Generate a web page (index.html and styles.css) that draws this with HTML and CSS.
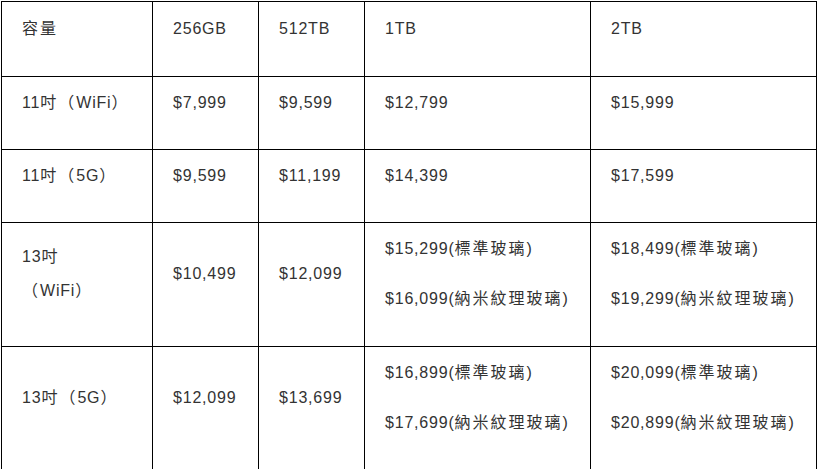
FILE: index.html
```html
<!DOCTYPE html>
<html lang="zh-Hant">
<head>
<meta charset="utf-8">
<link rel="stylesheet" href="styles.css">
</head>
<body>
<table class="price-table">
  <colgroup>
    <col class="c1"><col class="c2"><col class="c3"><col class="c4"><col class="c5">
  </colgroup>
  <tr class="head">
    <td><p><span class="zh">容量</span></p></td>
    <td><p>256GB</p></td>
    <td><p>512TB</p></td>
    <td><p>1TB</p></td>
    <td><p>2TB</p></td>
  </tr>
  <tr>
    <td><p>11<span class="zh">吋（</span>WiFi<span class="zh">）</span></p></td>
    <td><p>$7,999</p></td>
    <td><p>$9,599</p></td>
    <td><p>$12,799</p></td>
    <td><p>$15,999</p></td>
  </tr>
  <tr>
    <td><p>11<span class="zh">吋（</span>5G<span class="zh">）</span></p></td>
    <td><p>$9,599</p></td>
    <td><p>$11,199</p></td>
    <td><p>$14,399</p></td>
    <td><p>$17,599</p></td>
  </tr>
  <tr class="tall">
    <td><p class="wrap">13<span class="zh">吋</span><br><span class="zh">（</span>WiFi<span class="zh">）</span></p></td>
    <td><p>$10,499</p></td>
    <td><p>$12,099</p></td>
    <td><p>$15,299(<span class="zh">標準玻璃</span>)</p><p>$16,099(<span class="zh">納米紋理玻璃</span>)</p></td>
    <td><p>$18,499(<span class="zh">標準玻璃</span>)</p><p>$19,299(<span class="zh">納米紋理玻璃</span>)</p></td>
  </tr>
  <tr class="tall">
    <td><p>13<span class="zh">吋（</span>5G<span class="zh">）</span></p></td>
    <td><p>$12,099</p></td>
    <td><p>$13,699</p></td>
    <td><p>$16,899(<span class="zh">標準玻璃</span>)</p><p>$17,699(<span class="zh">納米紋理玻璃</span>)</p></td>
    <td><p>$20,099(<span class="zh">標準玻璃</span>)</p><p>$20,899(<span class="zh">納米紋理玻璃</span>)</p></td>
  </tr>
</table>
</body>
</html>
```
FILE: styles.css
```css
html, body {
  margin: 0;
  padding: 0;
  background: #fff;
}
body {
  padding: 1px 0 0 1px;
  font-family: "Liberation Sans", Arial, "Noto Sans CJK TC", sans-serif;
  font-size: 16px;
  color: #333;
}
.price-table {
  border-collapse: collapse;
  table-layout: fixed;
  width: 815px;
}
.c1 { width: 151px; }
.c2 { width: 106px; }
.c3 { width: 106px; }
.c4 { width: 226px; }
.c5 { width: 226px; }
.price-table td {
  border: 1px solid #000;
  padding: 11px 20px;
  vertical-align: middle;
  text-align: left;
  letter-spacing: 0.8px;
}
.price-table tr.head td {
  padding: 12px 20px;
}
.price-table tr.tall td {
  padding: 11px 20px 12px;
}
.price-table p {
  margin: 0 0 20px;
  line-height: 30px;
  white-space: nowrap;
}
.price-table p.wrap {
  line-height: 34px;
}
.zh {
  font-family: "Noto Sans CJK TC", sans-serif;
  letter-spacing: 2px;
  line-height: 16px;
}
```
